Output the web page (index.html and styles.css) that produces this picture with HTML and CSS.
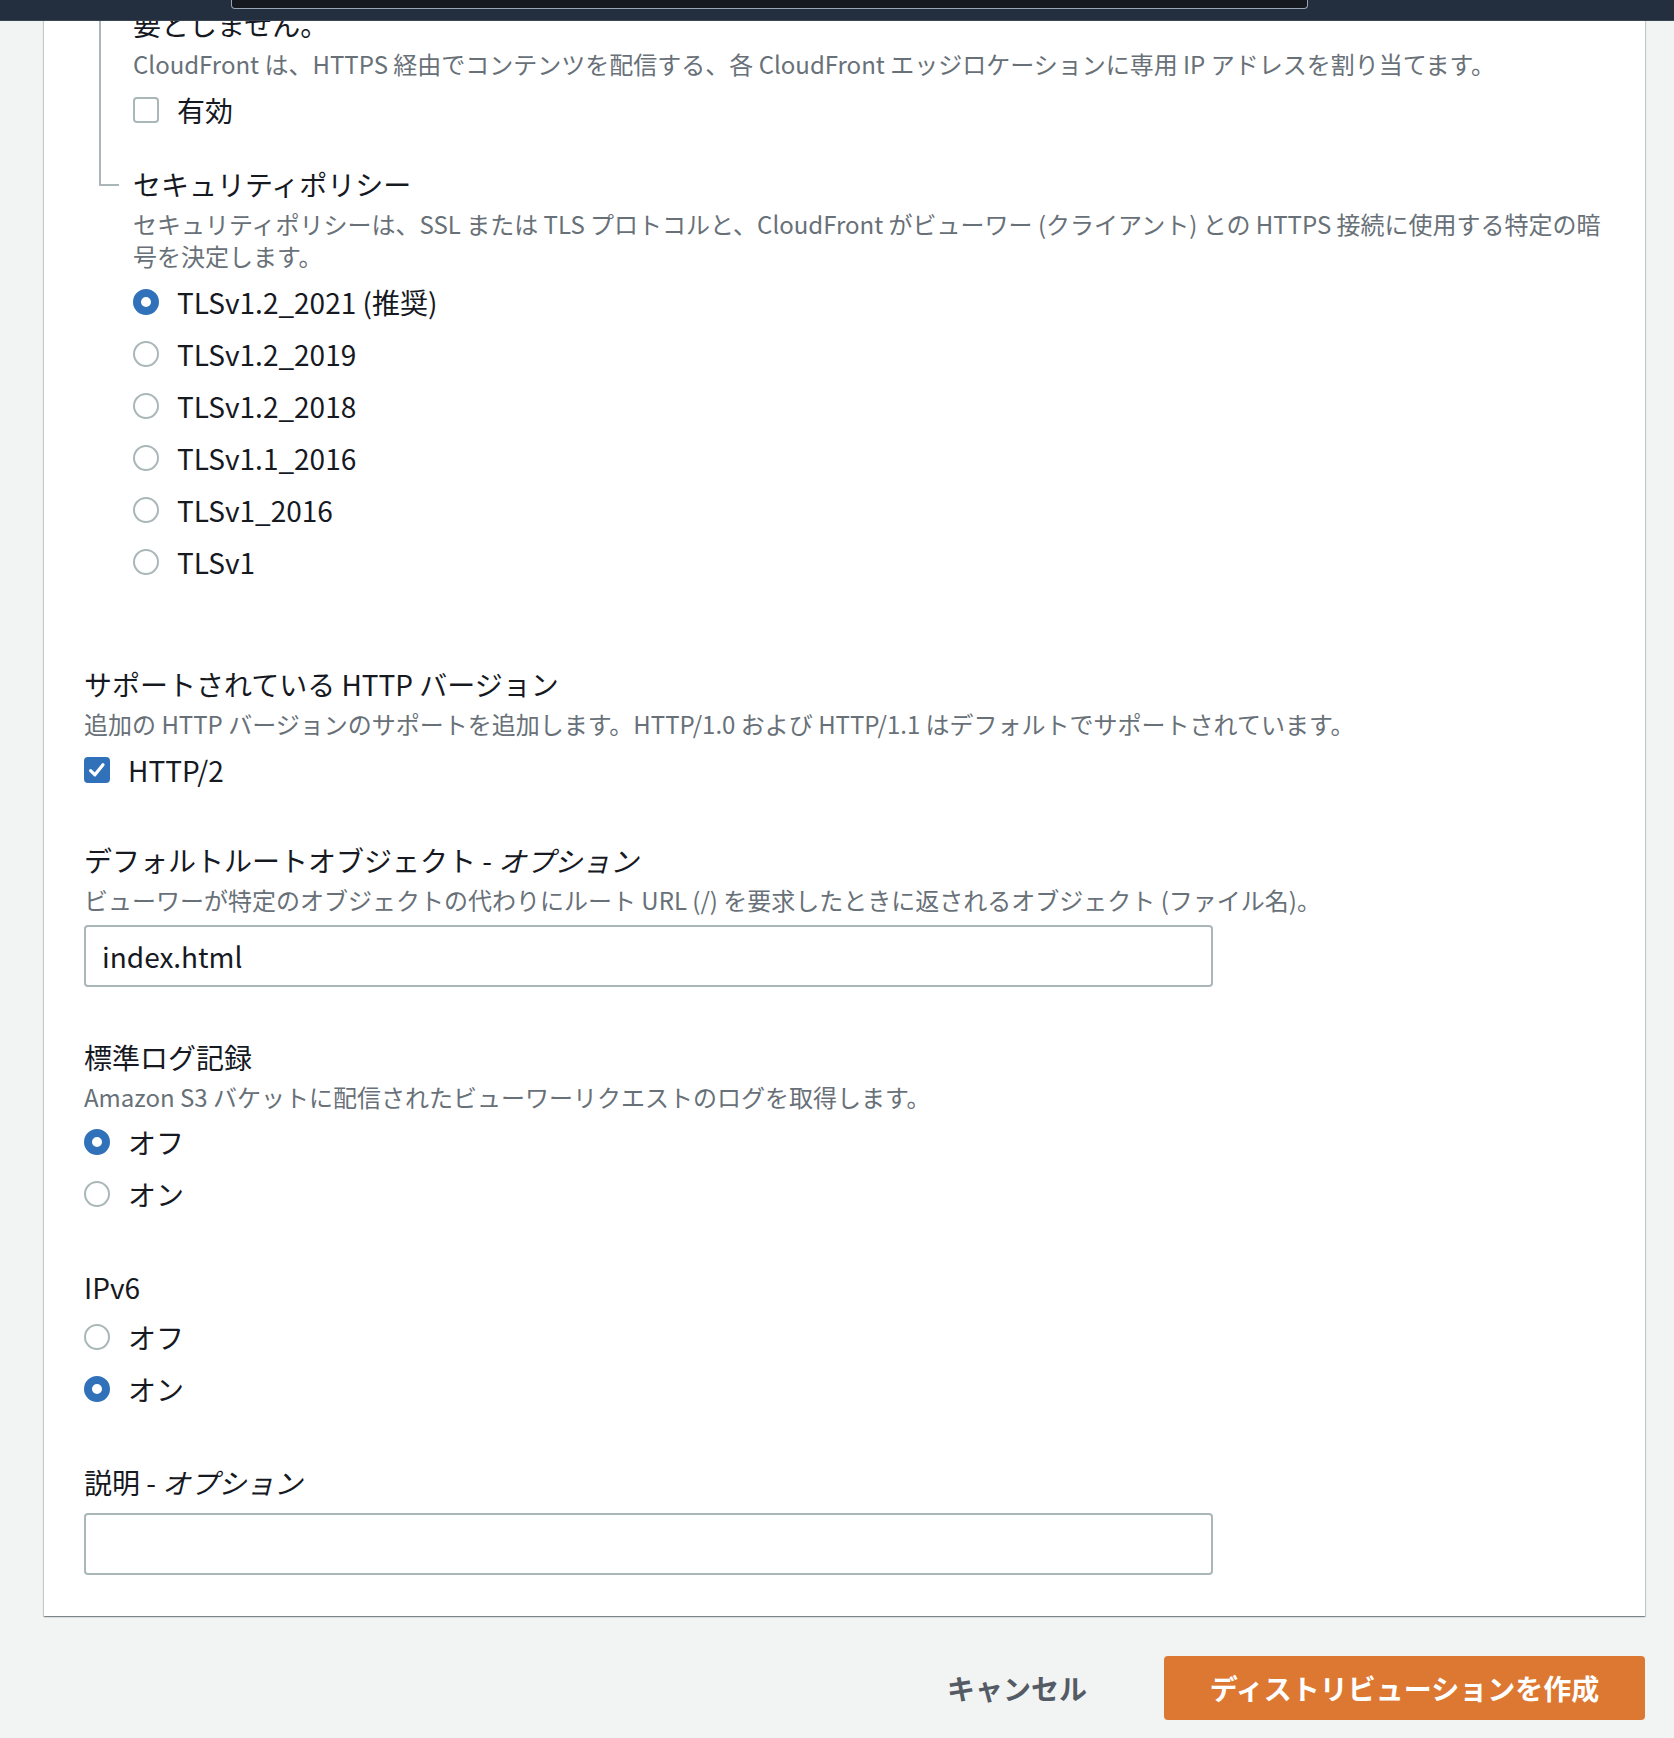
FILE: index.html
```html
<!DOCTYPE html>
<html lang="ja">
<head>
<meta charset="utf-8">
<title>ディストリビューションを作成</title>
<link rel="stylesheet" href="styles.css">
</head>
<body>
<header class="topbar"><div class="topbar-search"></div></header>
<main class="page">
  <section class="panel">
    <div class="nested">
      <div class="field nested-item nested-first">
        <div class="label">要としません。</div>
        <div class="desc">CloudFront は、HTTPS 経由でコンテンツを配信する、各 CloudFront エッジロケーションに専用 IP アドレスを割り当てます。</div>
        <div class="control-gap">
          <div class="choice"><span class="checkbox"></span><span class="choice-text">有効</span></div>
        </div>
      </div>
      <div class="field nested-item nested-last">
        <div class="label">セキュリティポリシー</div>
        <div class="desc nowrap">セキュリティポリシーは、SSL または TLS プロトコルと、CloudFront がビューワー (クライアント) との HTTPS 接続に使用する特定の暗<br>号を決定します。</div>
        <div class="radio-group control-gap">
          <div class="choice"><span class="radio checked"></span><span class="choice-text">TLSv1.2_2021 (推奨)</span></div>
          <div class="choice"><span class="radio"></span><span class="choice-text">TLSv1.2_2019</span></div>
          <div class="choice"><span class="radio"></span><span class="choice-text">TLSv1.2_2018</span></div>
          <div class="choice"><span class="radio"></span><span class="choice-text">TLSv1.1_2016</span></div>
          <div class="choice"><span class="radio"></span><span class="choice-text">TLSv1_2016</span></div>
          <div class="choice"><span class="radio"></span><span class="choice-text">TLSv1</span></div>
        </div>
      </div>
    </div>

    <div class="field field-http">
      <div class="label">サポートされている HTTP バージョン</div>
      <div class="desc">追加の HTTP バージョンのサポートを追加します。HTTP/1.0 および HTTP/1.1 はデフォルトでサポートされています。</div>
      <div class="control-gap">
        <div class="choice"><span class="checkbox checked"><svg viewBox="0 0 22 22" width="22" height="22"><path d="M4.6 11.6 L8.9 15.8 L17 5.8" fill="none" stroke="#fff" stroke-width="3.2" stroke-linecap="round" stroke-linejoin="round"/></svg></span><span class="choice-text">HTTP/2</span></div>
      </div>
    </div>

    <div class="field field-root">
      <div class="label">デフォルトルートオブジェクト - <i>オプション</i></div>
      <div class="desc">ビューワーが特定のオブジェクトの代わりにルート URL (/) を要求したときに返されるオブジェクト (ファイル名)。</div>
      <div class="input input-root">index.html</div>
    </div>

    <div class="field field-log">
      <div class="label">標準ログ記録</div>
      <div class="desc">Amazon S3 バケットに配信されたビューワーリクエストのログを取得します。</div>
      <div class="radio-group radio-log">
        <div class="choice"><span class="radio checked"></span><span class="choice-text">オフ</span></div>
        <div class="choice"><span class="radio"></span><span class="choice-text">オン</span></div>
      </div>
    </div>

    <div class="field field-ipv6">
      <div class="label">IPv6</div>
      <div class="radio-group radio-ipv6">
        <div class="choice"><span class="radio"></span><span class="choice-text">オフ</span></div>
        <div class="choice"><span class="radio checked"></span><span class="choice-text">オン</span></div>
      </div>
    </div>

    <div class="field field-desc">
      <div class="label">説明 - <i>オプション</i></div>
      <div class="input input-desc"></div>
    </div>
  </section>

  <div class="actions">
    <button class="btn-link" type="button">キャンセル</button>
    <button class="btn-primary" type="button">ディストリビューションを作成</button>
  </div>
</main>
</body>
</html>
```

FILE: styles.css
```css
* {
  box-sizing: border-box;
}

html, body {
  margin: 0;
  padding: 0;
}

body {
  background: #f2f3f3;
  font-family: "Noto Sans CJK JP", "Noto Sans", sans-serif;
  color: #16191f;
}

.topbar {
  position: fixed;
  top: 0;
  left: 0;
  right: 0;
  height: 21px;
  background: #232f3e;
  border-bottom: 1px solid #3a4553;
  padding-left: 231px;
  z-index: 10;
}

.topbar-search {
  width: 1077px;
  height: 9px;
  background: #16191f;
  border: 1px solid #9aa5b1;
  border-top: none;
  border-radius: 0 0 4px 4px;
}

.page {
  padding: 0 29px 18px 44px;
}

.panel {
  background: #ffffff;
  padding: 6px 40px 41px 40px;
  box-shadow: 0 1px 1px 0 rgba(0, 28, 36, 0.3), 1px 1px 1px 0 rgba(0, 28, 36, 0.15), -1px 1px 1px 0 rgba(0, 28, 36, 0.15);
}

.label {
  font-size: 28px;
  line-height: 36px;
  color: #16191f;
}

.label i {
  font-style: italic;
}

.desc {
  margin-top: 6px;
  font-size: 24px;
  line-height: 32px;
  color: #687078;
}

.nowrap {
  white-space: nowrap;
}

.control-gap {
  margin-top: 12px;
}

.nested {
  margin-left: 15px;
}

.nested-item {
  padding-left: 34px;
}

.nested-first {
  border-left: 2px solid #aab7b8;
  padding-left: 32px;
  padding-bottom: 38px;
}

.nested-last {
  position: relative;
}

.nested-last::before {
  content: "";
  position: absolute;
  left: 0;
  top: 0;
  width: 18px;
  height: 18px;
  border-left: 2px solid #aab7b8;
  border-bottom: 2px solid #aab7b8;
}

.choice {
  display: flex;
  align-items: center;
  height: 36px;
  gap: 18px;
}

.choice-text {
  font-size: 28px;
  line-height: 36px;
  color: #16191f;
}

.radio-group {
  display: flex;
  flex-direction: column;
  gap: 16px;
}

.radio {
  width: 26px;
  height: 26px;
  border-radius: 50%;
  border: 2px solid #aab7b8;
  background: #fff;
  flex: none;
}

.radio.checked {
  border: 8px solid #3171b9;
  background: #fff;
}

.checkbox {
  width: 26px;
  height: 26px;
  border-radius: 4px;
  border: 2px solid #aab7b8;
  background: #fff;
  flex: none;
  display: flex;
  align-items: center;
  justify-content: center;
}

.checkbox.checked {
  background: #3171b9;
  border-color: #3171b9;
}

.field-http {
  margin-top: 86px;
}

.field-root {
  margin-top: 54px;
}

.field-log {
  margin-top: 52px;
}

.field-ipv6 {
  margin-top: 57px;
}

.field-desc {
  margin-top: 57px;
}

.input {
  width: 1129px;
  height: 62px;
  border: 2px solid #aab7b8;
  border-radius: 4px;
  padding-left: 16px;
  font-size: 28px;
  line-height: 58px;
  color: #16191f;
}

.input-root {
  margin-top: 9px;
}

.input-desc {
  margin-top: 13px;
}

.radio-log {
  margin-top: 11px;
}

.radio-ipv6 {
  margin-top: 14px;
}

.actions {
  margin-top: 40px;
  display: flex;
  justify-content: flex-end;
  align-items: center;
}

.btn-link {
  background: none;
  border: none;
  padding: 0;
  margin-right: 77px;
  font-family: inherit;
  font-size: 28px;
  font-weight: 700;
  color: #545b64;
  line-height: 36px;
}

.btn-primary {
  width: 481px;
  height: 64px;
  background: #dd7833;
  border: none;
  border-radius: 4px;
  font-family: inherit;
  font-size: 28px;
  font-weight: 700;
  color: #ffffff;
  display: flex;
  align-items: center;
  justify-content: center;
  padding: 0;
}
```
